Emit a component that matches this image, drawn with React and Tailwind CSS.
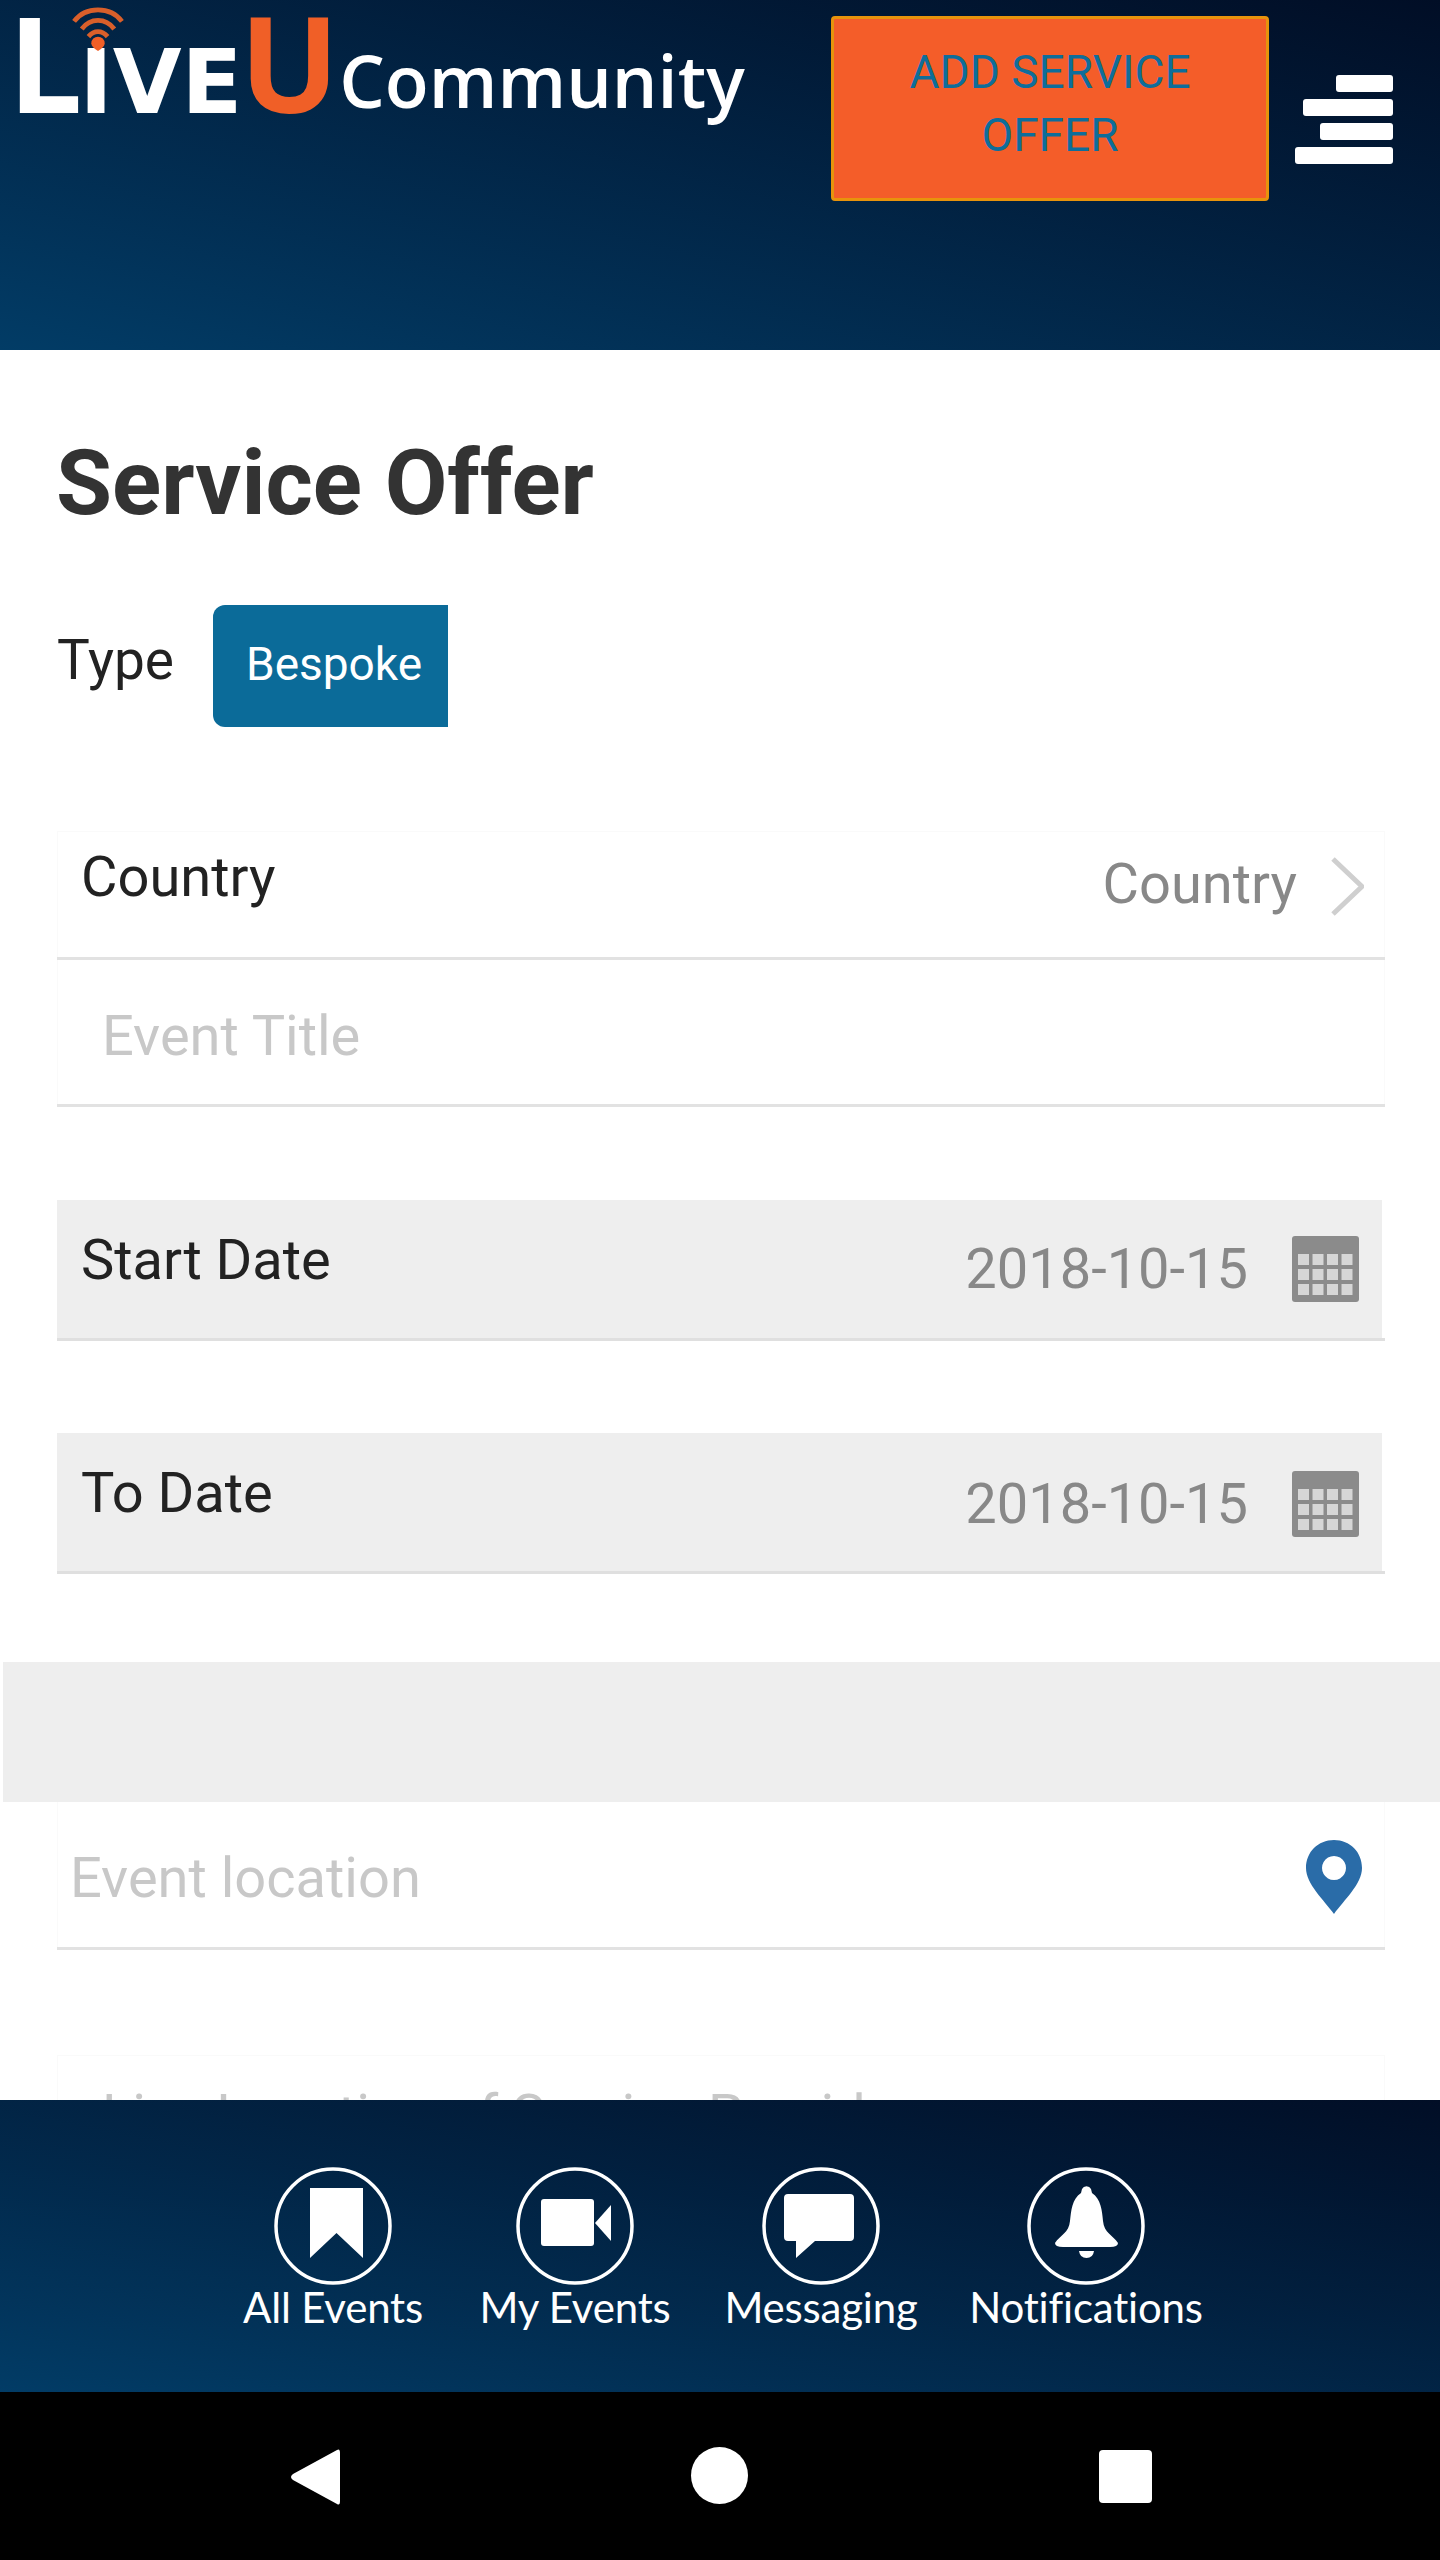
import React from 'react';

const roboto = { fontFamily: 'Roboto, sans-serif' };

function WifiMark() {
  return (
    <svg width="56" height="44" viewBox="0 0 56 46" className="absolute left-[62px] top-[7px]">
      <g fill="none" stroke="#d95f2a" strokeWidth="5">
        <path d="M3 15 C15 -1 41 -1 53 15" />
        <path d="M11 23 C20 11 36 11 45 23" />
        <path d="M18 31 C24 24 32 24 38 31" />
      </g>
      <path d="M21 38 a7 7 0 0 1 14 0 q0 4 -7 8 q-7 -4 -7 -8z" fill="#f05f27" />
    </svg>
  );
}

function Logo() {
  return (
    <div className="relative ml-[8px] flex items-baseline font-['Open_Sans',sans-serif] leading-[124px] text-white blur-[0.5px]">
      <WifiMark />
      <span className="text-[132px] font-bold tracking-[-3px]">L</span>
      <span className="font-['DejaVu_Sans',sans-serif] text-[89px] font-bold leading-none">IVE</span>
      <span className="ml-[-3px] text-[132px] font-bold text-[#f05f27]">U</span>
      <span className="-translate-y-[5px] text-[72px] font-semibold leading-none">Community</span>
    </div>
  );
}

function Hamburger() {
  return (
    <div className="flex w-[98px] flex-col items-end gap-[7px]">
      <div className="h-[17px] w-[57px] rounded-[3px] bg-white" />
      <div className="h-[17px] w-[90px] rounded-[3px] bg-white" />
      <div className="h-[17px] w-[73px] rounded-[3px] bg-white" />
      <div className="h-[17px] w-[98px] rounded-[3px] bg-white" />
    </div>
  );
}

function Header() {
  return (
    <header className="relative flex h-[350px] shrink-0 items-start bg-linear-to-tr from-[#023c66] to-[#010e26]">
      <Logo />
      <button className="absolute left-[831px] top-[16px] h-[185px] w-[438px] rounded-[4px] border-[3px] border-[#e8930c] bg-[#f45d29] pb-[10px] text-center text-[46px] leading-[63px] text-[#0e6d9a]" style={roboto}>
        ADD SERVICE<br />OFFER
      </button>
      <div className="absolute left-[1295px] top-[75px]">
        <Hamburger />
      </div>
    </header>
  );
}

function Chevron() {
  return (
    <svg width="33" height="59" viewBox="0 0 33 59" className="ml-[34px] mt-[25px]">
      <path d="M2 2 L31 29.5 L2 57" fill="none" stroke="#cfcfcf" strokeWidth="5" />
    </svg>
  );
}

function CalendarIcon() {
  return (
    <svg width="67" height="66" viewBox="0 0 67 66" className="ml-[44px] blur-[0.6px]">
      <rect width="67" height="66" rx="3" fill="#8b8b8b" />
      {[0, 1, 2, 3].map((col) =>
        [0, 1, 2].map((row) => (
          <rect key={`${col}-${row}`} x={6 + col * 14.5} y={18 + row * 15} width="11" height="11" fill="#d6d6d6" />
        ))
      )}
    </svg>
  );
}

function DateRow({ label, valueClass }) {
  return (
    <div className="h-[141px] border-b-[3px] border-[#dfdfdf]">
      <div className="mr-[3px] flex h-full items-start justify-between bg-[#eeeeee] pl-[24px] pr-[23px]">
        <span className="mt-[28px] text-[56px] leading-[64px] text-[#222222]">{label}</span>
        <div className={`flex items-center ${valueClass}`}>
          <span className="text-[56px] leading-[66px] text-[#888888]">2018-10-15</span>
          <CalendarIcon />
        </div>
      </div>
    </div>
  );
}

function CircleIcon({ children }) {
  return (
    <svg width="118" height="118" viewBox="0 0 118 118">
      <circle cx="59" cy="59" r="57" fill="none" stroke="white" strokeWidth="3.5" />
      {children}
    </svg>
  );
}

const navItems = [
  {
    label: 'All Events',
    width: 'w-[184px]',
    icon: <path d="M36 21 H89 V91 L62.5 66 L36 91 Z" fill="white" />,
  },
  {
    label: 'My Events',
    width: 'w-[192px]',
    icon: (
      <>
        <rect x="25" y="32" width="53" height="47" rx="3" fill="white" />
        <path d="M95 38 V74 L79 56 Z" fill="white" />
      </>
    ),
  },
  {
    label: 'Messaging',
    width: 'w-[192px]',
    icon: (
      <path d="M26 27 H88 a4 4 0 0 1 4 4 V70 a4 4 0 0 1 -4 4 H53 L34 91 V74 H26 a4 4 0 0 1 -4 -4 V31 a4 4 0 0 1 4 -4 Z" fill="white" />
    ),
  },
  {
    label: 'Notifications',
    width: 'w-[230px]',
    icon: (
      <>
        <path d="M55 22 a5 5 0 0 1 9 0 l1 4 C74 32 75 44 76 54 C77 66 86 68 91 76 Q91 80 83 80 H36 Q28 80 28 76 C33 68 42 66 43 54 C44 44 45 32 54 26 Z" fill="white" />
        <path d="M52 84 H67 Q66 91 59.5 91 Q53 91 52 84 Z" fill="white" />
      </>
    ),
  },
];

function BottomNav() {
  return (
    <nav className="flex h-[292px] shrink-0 justify-center gap-[54px] bg-linear-to-tr from-[#023c66] to-[#010e26] pt-[67px] pl-[2px]">
      {navItems.map((item) => (
        <div key={item.label} className={`flex flex-col items-center ${item.width}`}>
          <CircleIcon>{item.icon}</CircleIcon>
          <span className="mt-[-7px] whitespace-nowrap font-['Lato',sans-serif] text-[42px] leading-[58px] tracking-[-0.2px] text-white">{item.label}</span>
        </div>
      ))}
    </nav>
  );
}

function SystemBar() {
  return (
    <div className="flex h-[168px] shrink-0 items-start bg-black pt-[55px]">
      <svg width="52" height="60" viewBox="0 0 52 60" className="ml-[289px]">
        <path d="M48 3 Q51 1 51 6 V54 Q51 59 48 57 L4 33 Q0 30 4 27 Z" fill="white" />
      </svg>
      <div className="ml-[350px] h-[57px] w-[57px] rounded-full bg-white" />
      <div className="ml-[351px] mt-[3px] h-[53px] w-[53px] rounded-[4px] bg-white" />
    </div>
  );
}

export default function App() {
  return (
    <div className="flex h-[2560px] w-[1440px] flex-col overflow-hidden bg-white" style={roboto}>
      <Header />

      <main className="min-h-0 flex-1 overflow-hidden pl-[57px] pr-[55px]">
        <h1 className="-ml-[1px] mt-[83px] text-[91px] font-bold leading-[100px] text-[#333333]">Service Offer</h1>

        <div className="mt-[72px] flex items-start">
          <span className="mt-[23px] text-[55px] leading-[64px] text-[#222222]">Type</span>
          <div className="ml-[39px] flex h-[122px] w-[235px] items-center rounded-l-[12px] bg-[#0b6b99] pb-[3px] pl-[33px] text-[46px] text-white">
            Bespoke
          </div>
        </div>

        <div className="mt-[104px] flex h-[126px] items-start justify-between border-x border-t border-x-[#fafafa] border-t-[#fafafa] pl-[23px] pr-[20px] shadow-[0_3px_0_0_#e2e2e2]">
          <span className="mt-[13px] text-[56px] leading-[64px] text-[#222222]">Country</span>
          <div className="flex items-start">
            <span className="mt-[20px] text-[56px] leading-[64px] text-[#888888]">Country</span>
            <Chevron />
          </div>
        </div>

        <div className="mt-[3px] flex h-[144px] items-start border-x border-x-[#fafafa] pl-[44px] shadow-[0_3px_0_0_#e2e2e2]">
          <span className="mt-[44px] text-[56px] leading-[64px] text-[#c8c8c8]">Event Title</span>
        </div>

        <div className="mt-[96px]">
          <DateRow label="Start Date" valueClass="pt-[36px]" />
        </div>
        <div className="mt-[92px]">
          <DateRow label="To Date" valueClass="pt-[38px]" />
        </div>

        <div className="-ml-[54px] -mr-[55px] mt-[88px] h-[140px] bg-[#eeeeee]" />

        <div className="flex h-[145px] items-start justify-between border-x border-x-[#fafafa] pl-[12px] pr-[22px] shadow-[0_3px_0_0_#e2e2e2]">
          <span className="mt-[44px] text-[56px] leading-[64px] text-[#c8c8c8]">Event location</span>
          <svg width="56" height="74" viewBox="0 0 56 74" className="mt-[38px]">
            <path fillRule="evenodd" d="M28 0 C44 0 56 12 56 28 C56 44 38 60 28 74 C18 60 0 44 0 28 C0 12 12 0 28 0 Z M28 16 a12 12 0 1 0 0.01 0 Z" fill="#2a6ca8" />
          </svg>
        </div>

        <div className="mt-[108px] h-[60px] border-x border-t border-[#fafafa] pl-[44px] pt-[27px] text-[56px] leading-[64px] text-[#c8c8c8]">Live Location of Service Provider</div>
      </main>

      <BottomNav />
      <SystemBar />
    </div>
  );
}
